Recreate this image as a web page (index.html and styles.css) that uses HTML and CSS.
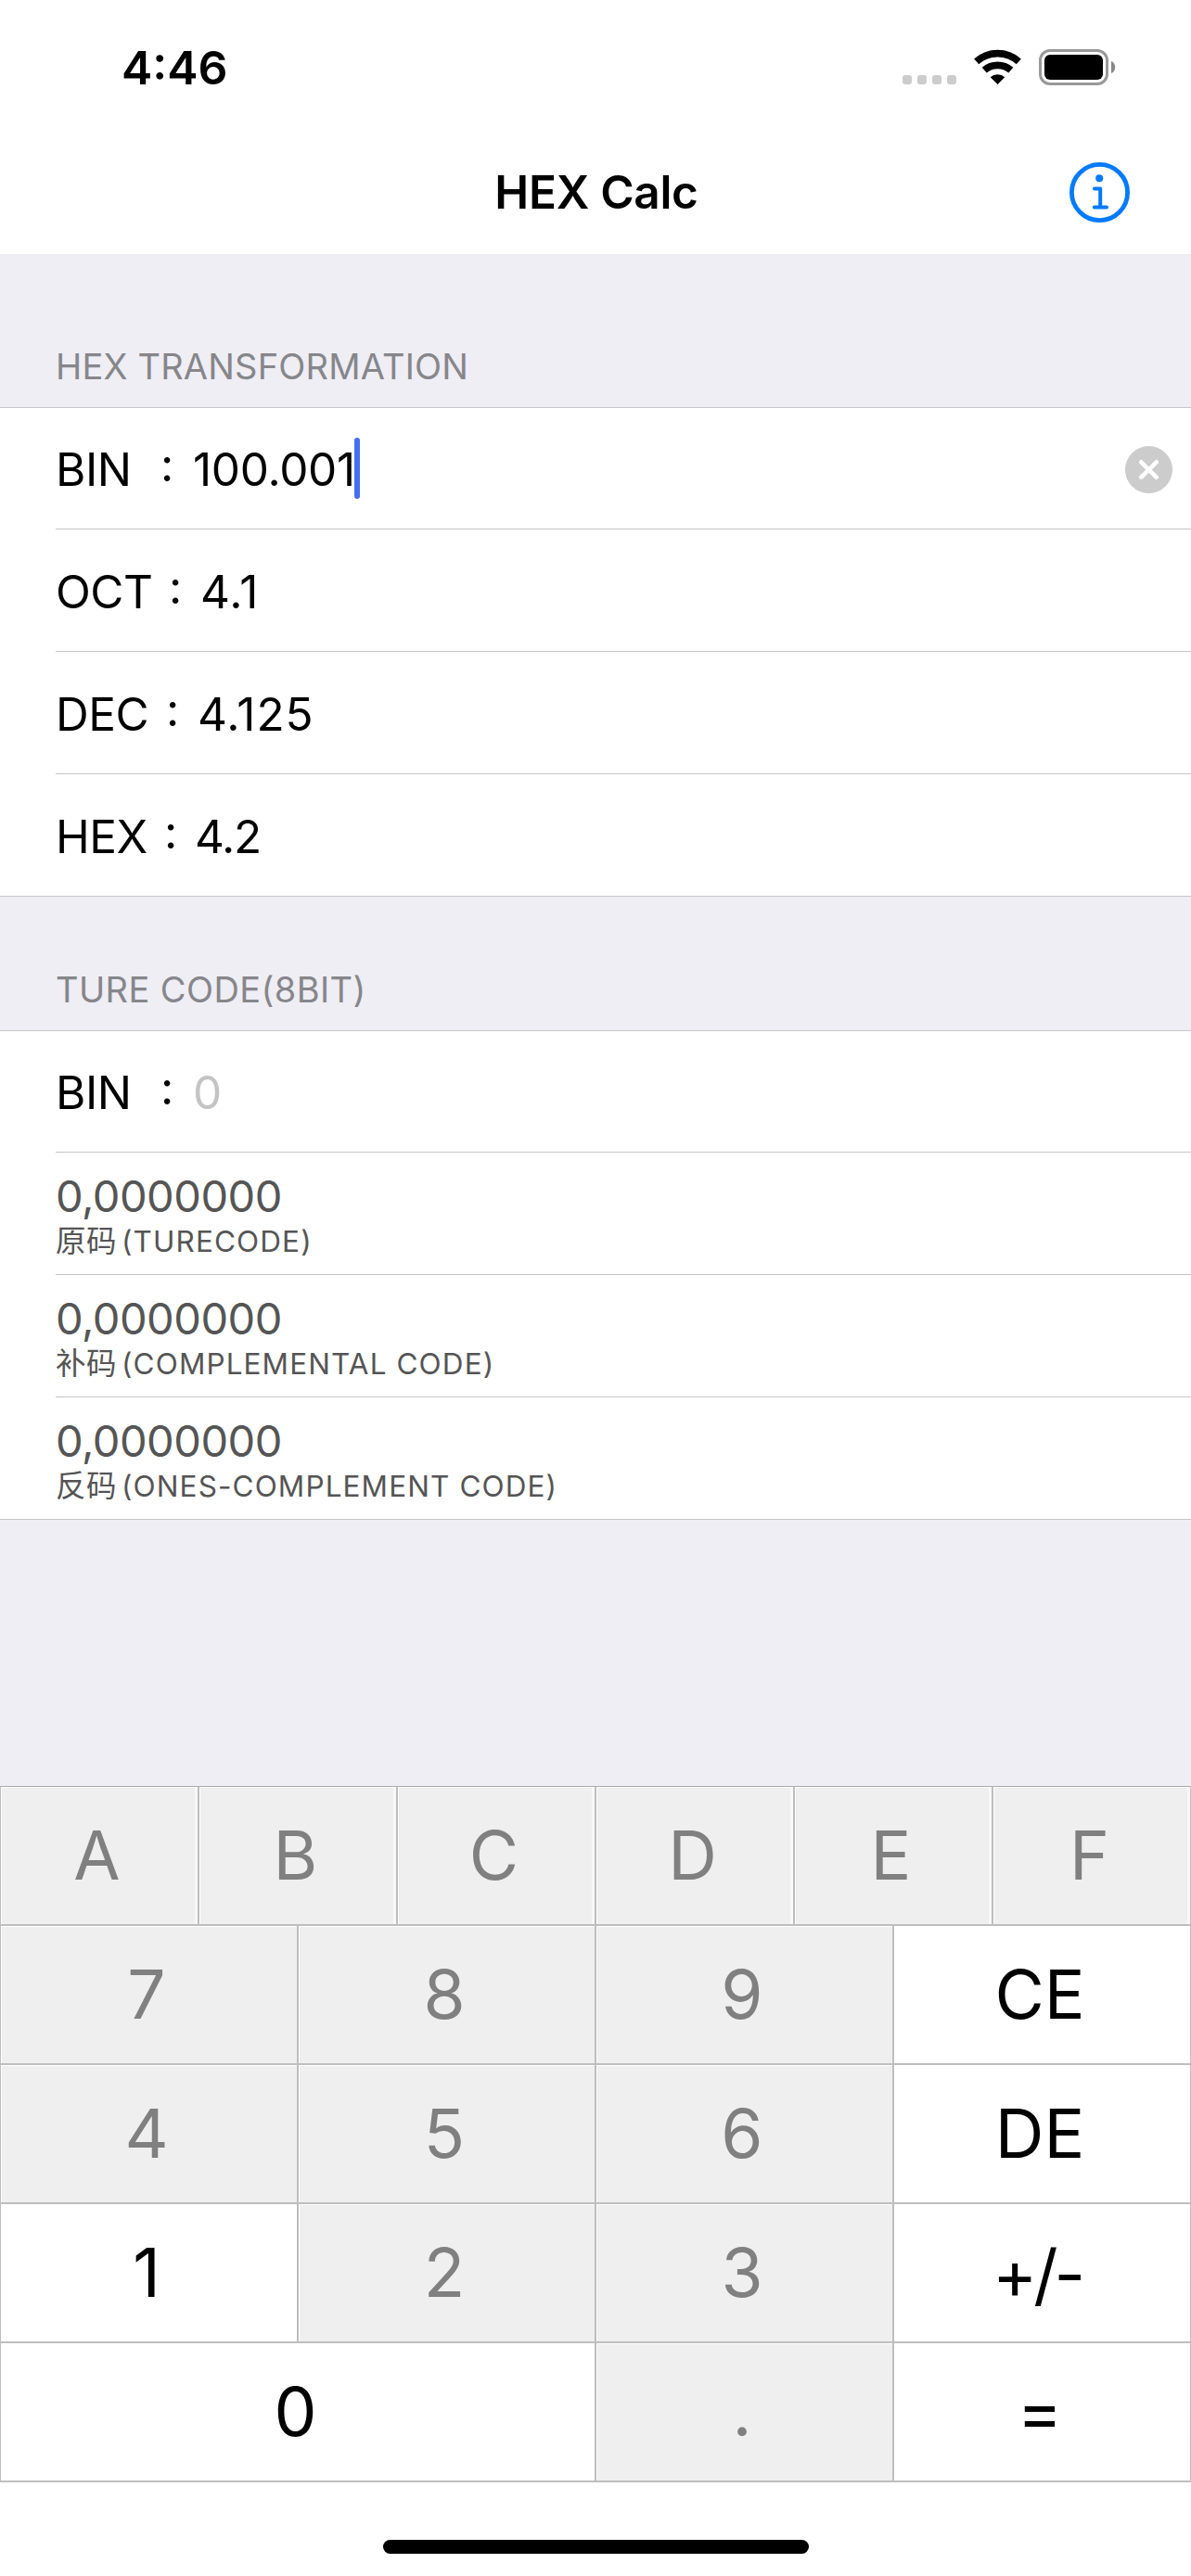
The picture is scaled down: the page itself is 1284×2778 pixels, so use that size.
FILE: index.html
```html
<!DOCTYPE html>
<html lang="en">
<head>
    <meta charset="UTF-8">
    <meta name="viewport" content="width=device-width, initial-scale=1.0">
    <title>HEX Calc</title>
    <link rel="stylesheet" href="styles.css">
</head>
<body>

<header>
    <div class="status-bar">
        <span class="time">4:46</span>
        <div class="status-icons">
            <svg class="signal" width="58" height="40" viewBox="0 0 58 40" fill="#ccc">
                <rect x="0" y="28" width="10" height="10" rx="3"/>
                <rect x="16" y="28" width="10" height="10" rx="3"/>
                <rect x="32" y="28" width="10" height="10" rx="3"/>
                <rect x="48" y="28" width="10" height="10" rx="3"/>
            </svg>
            <svg class="wifi" width="51" height="40" viewBox="0 0 51 40">
                <path d="M2.7 13.3A34.2 34.2 0 0 1 48.3 13.3M11.2 22.6A22 22 0 0 1 39.8 22.6" fill="none" stroke="#000" stroke-width="7.7"/>
                <path d="M25.5 38L17.7 30.2A12 12 0 0 1 33.3 30.2Z"/>
            </svg>
            <svg class="battery" width="83" height="40" viewBox="0 0 83 40">
                <rect x="1.5" y="1.5" width="72" height="36" rx="10.5" fill="none" stroke="#999" stroke-width="3"/>
                <rect x="6" y="6" width="63" height="27" rx="6"/>
                <path d="M78 13C81 14 82.2 17 82.2 19.5S81 25 78 26Z" fill="#888"/>
            </svg>
        </div>
    </div>
    <div class="nav-bar">
        <h1>HEX Calc</h1>
        <svg class="info" width="65" height="65" viewBox="0 0 65 65" fill="none" stroke="#007aff" stroke-linecap="round" stroke-linejoin="round">
            <circle cx="32.5" cy="32.5" r="30.1" stroke-width="4.8"/>
            <circle cx="32.2" cy="17.2" r="4" fill="#007aff" stroke="none"/>
            <path d="M27 28.5H33.2V48.5M26.8 48.5H40" stroke-width="4"/>
        </svg>
    </div>
</header>

<main>
    <h2 class="first">HEX TRANSFORMATION</h2>
    <div class="list">
        <div class="row">
            <span class="name bin">BIN</span><span class="colon">:</span><span class="value">100.001</span><span class="caret"></span>
            <svg class="clear" width="51" height="51" viewBox="0 0 51 51">
                <circle cx="25.5" cy="25.5" r="25.5" fill="#ccc"/>
                <path d="M17.3 17.3L33.7 33.7M33.7 17.3L17.3 33.7" stroke="#fff" stroke-width="4.6" stroke-linecap="round"/>
            </svg>
        </div>
        <div class="row"><span class="name oct">OCT</span><span class="colon">:</span><span class="value wide">4.1</span></div>
        <div class="row"><span class="name dec">DEC</span><span class="colon">:</span><span class="value wide">4.125</span></div>
        <div class="row"><span class="name hex">HEX</span><span class="colon">:</span><span class="value tight">4.2</span></div>
    </div>

    <h2>TURE CODE(8BIT)</h2>
    <div class="list">
        <div class="row"><span class="name bin">BIN</span><span class="colon">:</span><span class="value placeholder">0</span></div>
        <div class="row code">
            <span class="bits">0,0000000</span>
            <span class="caption"><span class="zh" lang="zh">原码</span>(TURECODE)</span>
        </div>
        <div class="row code">
            <span class="bits">0,0000000</span>
            <span class="caption"><span class="zh" lang="zh">补码</span>(COMPLEMENTAL CODE)</span>
        </div>
        <div class="row code">
            <span class="bits">0,0000000</span>
            <span class="caption"><span class="zh" lang="zh">反码</span>(ONES-COMPLEMENT CODE)</span>
        </div>
    </div>
</main>

<div class="keypad">
    <button class="letter" disabled>A</button>
    <button class="letter" disabled>B</button>
    <button class="letter" disabled>C</button>
    <button class="letter" disabled>D</button>
    <button class="letter" disabled>E</button>
    <button class="letter" disabled>F</button>
    <button disabled>7</button>
    <button disabled>8</button>
    <button disabled>9</button>
    <button>CE</button>
    <button disabled>4</button>
    <button disabled>5</button>
    <button disabled>6</button>
    <button>DE</button>
    <button>1</button>
    <button disabled>2</button>
    <button disabled>3</button>
    <button class="sign">+/-</button>
    <button class="zero">0</button>
    <button disabled>.</button>
    <button>=</button>
</div>

<div class="home-indicator"></div>

</body>
</html>
```

FILE: styles.css
```css
* {
    box-sizing: border-box;
}
body {
    display: flex;
    flex-direction: column;
    width: 1284px;
    height: 2778px;
    margin: 0;
    background-color: #fff;
    font-family: Inter, "Noto Sans CJK SC", sans-serif;
    color: #000;
}
.status-bar {
    display: flex;
    justify-content: space-between;
    align-items: center;
    height: 140px;
    padding: 6px 81px 0 131px;
}
.time {
    font-size: 50px;
    font-weight: 600;
    letter-spacing: 0;
}
.status-icons {
    display: flex;
}
.wifi {
    margin: 0 19px;
}
.nav-bar {
    display: grid;
    grid-template-columns: 1fr auto 1fr;
    align-items: center;
    height: 134px;
    padding: 0 66px;
}
h1 {
    grid-column: 2;
    margin: 0 0 0 2px;
    font-size: 49.5px;
    font-weight: 600;
    letter-spacing: -0.3px;
}
.info {
    justify-self: end;
}
main {
    height: 1652px;
    background-color: #efeef4;
}
h2 {
    display: flex;
    align-items: flex-end;
    height: 144px;
    margin: 0;
    padding: 0 60px 20px;
    font-size: 38px;
    font-weight: 400;
    line-height: 48px;
    letter-spacing: 0.4px;
    color: #86868b;
}
h2.first {
    height: 165px;
    letter-spacing: 0.2px;
}
.list {
    border-top: 1px solid #c6c6c8;
    border-bottom: 1px solid #c6c6c8;
    background-color: #fff;
}
.row {
    display: flex;
    align-items: center;
    height: 132px;
    margin-left: 60px;
    padding: 2px 20px 0 0;
    border-bottom: 1px solid #c6c6c8;
    font-size: 49.5px;
    letter-spacing: -0.5px;
}
.row:first-child {
    height: 131px;
}
.row:last-child {
    height: 131px;
    border-bottom: none;
}
.bin {
    width: 96px;
}
.oct {
    width: 105px;
}
.dec {
    width: 102px;
}
.hex {
    width: 100px;
}
.colon {
    width: 48px;
    text-align: center;
    font-feature-settings: "case";
}
.value {
    margin-left: 4px;
    letter-spacing: -0.3px;
}
.wide {
    margin-left: 3px;
    letter-spacing: 1px;
}
.tight {
    margin-left: 2px;
    letter-spacing: -1.3px;
}
.placeholder {
    color: #c4c4c6;
}
.caret {
    width: 6px;
    height: 66px;
    margin: -2px 0 0 -1px;
    border-radius: 3px;
    background-color: #466ff2;
}
.clear {
    margin-left: auto;
}
.code {
    flex-direction: column;
    align-items: flex-start;
    justify-content: center;
    color: #555;
}
.bits {
    font-size: 47px;
    line-height: 54px;
}
.caption {
    display: flex;
    height: 40px;
    font-size: 31.5px;
    line-height: 43px;
    letter-spacing: 1.1px;
}
.zh {
    margin-right: 5px;
    font-size: 32.5px;
    letter-spacing: 0.5px;
}
.keypad {
    display: grid;
    grid-template-columns: repeat(12, 1fr);
    grid-auto-rows: 150px;
    border-bottom: 1px solid #bebebe;
}
button {
    grid-column: span 3;
    padding: 0 5px 2px 0;
    border: 1px solid #bebebe;
    border-radius: 0;
    background-color: #fff;
    font-family: inherit;
    font-size: 73px;
    color: #000;
}
button:disabled {
    background-color: #efefef;
    box-shadow: inset 1px 1px 0 #fff;
    color: #808080;
}
button.letter {
    grid-column: span 2;
    border-top-color: #aaa;
    box-shadow: inset 1px 1px 0 #fff, inset -3px 0 0 #f8f8f8;
}
button.zero {
    grid-column: span 6;
}
button.sign {
    padding: 2px 11px 0 0;
    letter-spacing: -4px;
}
.home-indicator {
    width: 459px;
    height: 15px;
    margin: 62px auto 0;
    border-radius: 8px;
    background-color: #000;
}
```
